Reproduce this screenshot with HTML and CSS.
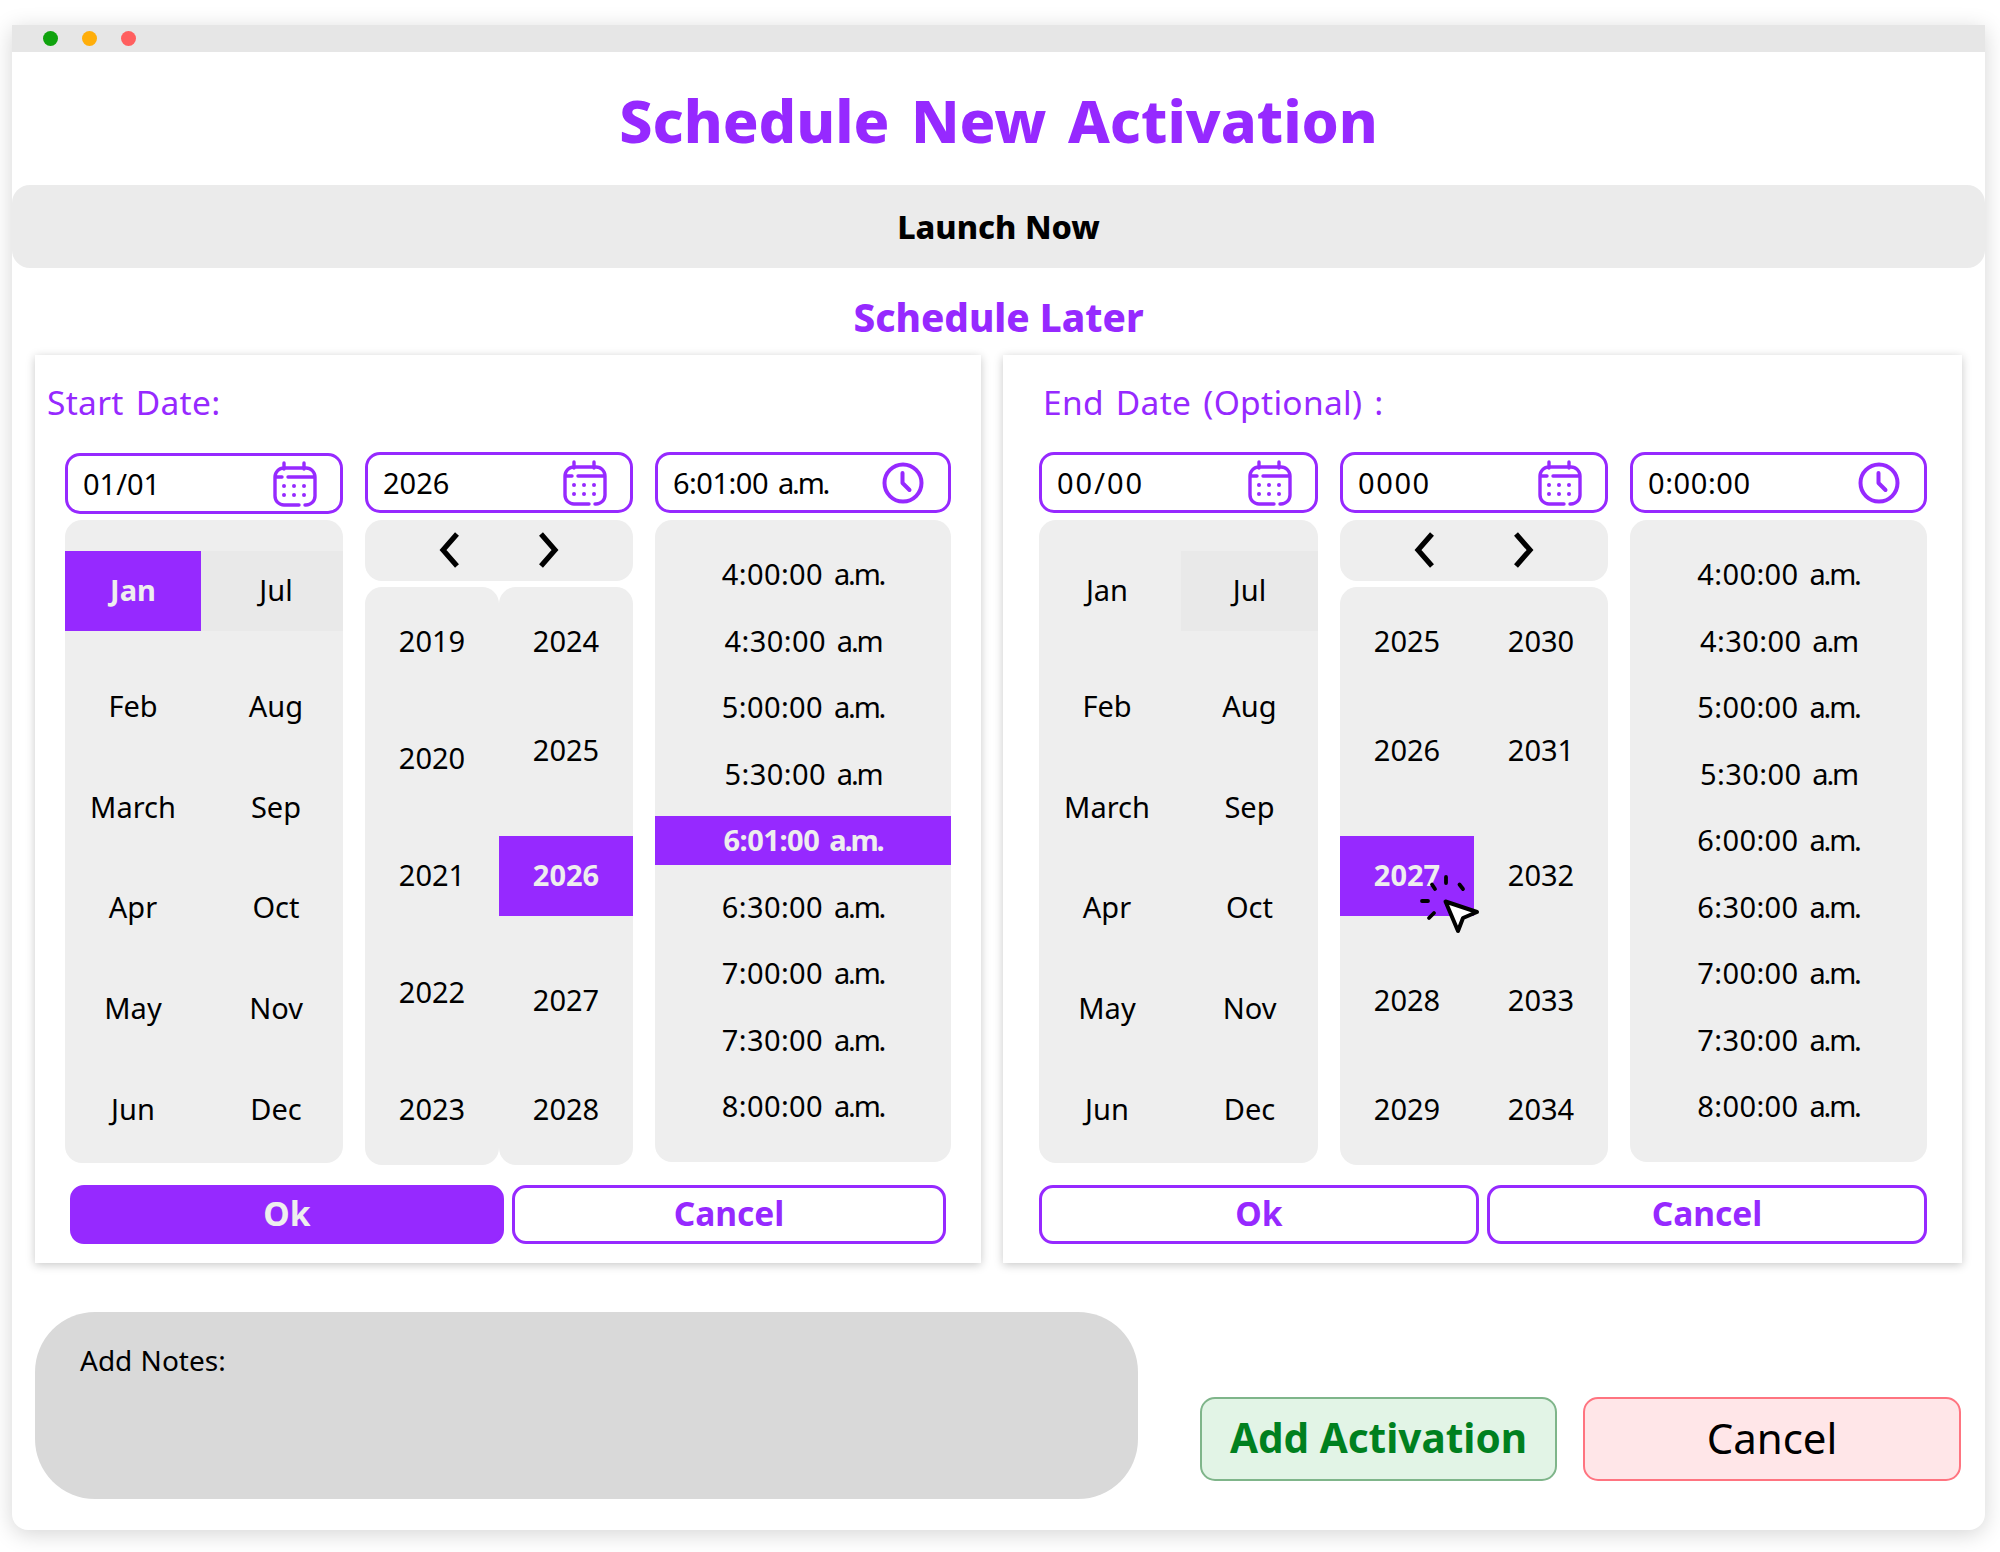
FILE: index.html
```html
<!DOCTYPE html>
<html lang="en">
<head>
<meta charset="utf-8">
<title>Schedule New Activation</title>
<link rel="stylesheet" href="styles.css">
</head>
<body>
<svg class="sprite" aria-hidden="true">
  <symbol id="i-cal" viewBox="10 8 50 50">
    <path d="M39 54H24a9 9 0 0 1-9-9V26a9 9 0 0 1 9-9H46a9 9 0 0 1 9 9V45a9 9 0 0 1-9 9H45M15 26H22M28 26H55M24 12V18M44 12V18" fill="none" stroke="currentColor" stroke-width="3.4" stroke-linecap="round"/>
    <g fill="currentColor"><circle cx="24" cy="35" r="2"/><circle cx="34" cy="35" r="2"/><circle cx="44" cy="35" r="2"/><circle cx="24" cy="44" r="2"/><circle cx="34" cy="44" r="2"/><circle cx="44" cy="44" r="2"/></g>
  </symbol>
  <symbol id="i-clock" viewBox="7.5 8 50 50">
    <circle cx="32.5" cy="33" r="18.5" fill="none" stroke="currentColor" stroke-width="4"/>
    <path d="M32 23V33L39 40" fill="none" stroke="currentColor" stroke-width="4" stroke-linecap="round" stroke-linejoin="round"/>
  </symbol>
  <symbol id="i-prev" viewBox="0 0 24 38">
    <path d="M19 3L5 19L19 35" fill="none" stroke="currentColor" stroke-width="5.2"/>
  </symbol>
  <symbol id="i-next" viewBox="0 0 24 38">
    <path d="M5 3L19 19L5 35" fill="none" stroke="currentColor" stroke-width="5.2"/>
  </symbol>
</svg>

<main class="window">
  <div class="titlebar">
    <span class="dot dot-green"></span>
    <span class="dot dot-orange"></span>
    <span class="dot dot-red"></span>
  </div>

  <h1 class="title">Schedule New Activation</h1>
  <div class="launch">Launch Now</div>
  <h2 class="later">Schedule Later</h2>

  <div class="cards">
    <section class="card card-start">
      <div class="card-label">Start Date:</div>
      <div class="pickers">
        <div class="col">
          <div class="field field-low"><span>01/01</span><svg class="ico"><use href="#i-cal"/></svg></div>
          <div class="months">
            <div class="m m-sel">Jan</div><div class="m m-hover">Jul</div>
            <div class="m">Feb</div><div class="m">Aug</div>
            <div class="m">March</div><div class="m">Sep</div>
            <div class="m">Apr</div><div class="m">Oct</div>
            <div class="m">May</div><div class="m">Nov</div>
            <div class="m">Jun</div><div class="m">Dec</div>
          </div>
        </div>
        <div class="col">
          <div class="field"><span>2026</span><svg class="ico"><use href="#i-cal"/></svg></div>
          <div class="year-nav"><svg class="chev"><use href="#i-prev"/></svg><svg class="chev"><use href="#i-next"/></svg></div>
          <div class="years">
            <div class="y-col y-col-even">
              <div class="y">2019</div><div class="y">2020</div><div class="y">2021</div><div class="y">2022</div><div class="y">2023</div>
            </div>
            <div class="y-col">
              <div class="y">2024</div><div class="y">2025</div><div class="y y-sel">2026</div><div class="y">2027</div><div class="y">2028</div>
            </div>
          </div>
        </div>
        <div class="col">
          <div class="field field-tight"><span>6:01:00 <span class="ap">a.m.</span></span><svg class="ico"><use href="#i-clock"/></svg></div>
          <div class="times">
            <div class="t">4:00:00 <span class="ap">a.m.</span></div><div class="t">4:30:00 <span class="ap">a.m</span></div><div class="t">5:00:00 <span class="ap">a.m.</span></div><div class="t">5:30:00 <span class="ap">a.m</span></div>
            <div class="t t-sel">6:01:00 <span class="ap">a.m.</span></div>
            <div class="t">6:30:00 <span class="ap">a.m.</span></div><div class="t">7:00:00 <span class="ap">a.m.</span></div><div class="t">7:30:00 <span class="ap">a.m.</span></div><div class="t">8:00:00 <span class="ap">a.m.</span></div>
          </div>
        </div>
      </div>
      <div class="actions">
        <button class="btn btn-solid">Ok</button>
        <button class="btn">Cancel</button>
      </div>
    </section>

    <section class="card card-end">
      <div class="card-label">End Date (Optional) :</div>
      <div class="pickers">
        <div class="col">
          <div class="field field-blank-date"><span>00/00</span><svg class="ico"><use href="#i-cal"/></svg></div>
          <div class="months">
            <div class="m">Jan</div><div class="m m-hover">Jul</div>
            <div class="m">Feb</div><div class="m">Aug</div>
            <div class="m">March</div><div class="m">Sep</div>
            <div class="m">Apr</div><div class="m">Oct</div>
            <div class="m">May</div><div class="m">Nov</div>
            <div class="m">Jun</div><div class="m">Dec</div>
          </div>
        </div>
        <div class="col">
          <div class="field field-blank-year"><span>0000</span><svg class="ico"><use href="#i-cal"/></svg></div>
          <div class="year-nav"><svg class="chev"><use href="#i-prev"/></svg><svg class="chev"><use href="#i-next"/></svg></div>
          <div class="years years-joined">
            <div class="y-col">
              <div class="y">2025</div><div class="y">2026</div>
              <div class="y y-sel">2027
                <svg class="cursor" viewBox="0 0 100 100" aria-hidden="true">
                  <path d="M45.5 42.5L77 53L63 59L58 72Z" fill="#fff" stroke="#000" stroke-width="4" stroke-linejoin="round"/>
                  <path d="M46 18V24M59.5 25.500L63 30M32 25.500L35 30M22 42H28M29 59L34 54" fill="none" stroke="#000" stroke-width="3.800" stroke-linecap="round"/>
                </svg>
              </div>
              <div class="y">2028</div><div class="y">2029</div>
            </div>
            <div class="y-col">
              <div class="y">2030</div><div class="y">2031</div><div class="y y-tall">2032</div><div class="y">2033</div><div class="y">2034</div>
            </div>
          </div>
        </div>
        <div class="col">
          <div class="field field-blank-time"><span>0:00:00</span><svg class="ico"><use href="#i-clock"/></svg></div>
          <div class="times">
            <div class="t">4:00:00 <span class="ap">a.m.</span></div><div class="t">4:30:00 <span class="ap">a.m</span></div><div class="t">5:00:00 <span class="ap">a.m.</span></div><div class="t">5:30:00 <span class="ap">a.m</span></div>
            <div class="t">6:00:00 <span class="ap">a.m.</span></div>
            <div class="t">6:30:00 <span class="ap">a.m.</span></div><div class="t">7:00:00 <span class="ap">a.m.</span></div><div class="t">7:30:00 <span class="ap">a.m.</span></div><div class="t">8:00:00 <span class="ap">a.m.</span></div>
          </div>
        </div>
      </div>
      <div class="actions">
        <button class="btn">Ok</button>
        <button class="btn">Cancel</button>
      </div>
    </section>
  </div>

  <div class="bottom">
    <div class="notes">Add Notes:</div>
    <button class="cta cta-add">Add Activation</button>
    <button class="cta cta-cancel">Cancel</button>
  </div>
</main>
</body>
</html>
```
FILE: styles.css
```css
* { box-sizing: border-box; }
html, body { margin: 0; padding: 0; background: #fff; }
body {
  width: 2000px;
  height: 1552px;
  overflow: hidden;
  padding: 25px 15px 22px 12px;
  font-family: "Noto Sans", "Open Sans", sans-serif;
  font-size: 29px;
  color: #000;
}
.sprite { position: absolute; width: 0; height: 0; }

.window {
  width: 1973px;
  height: 1505px;
  background: #fff;
  border-radius: 0 0 16px 16px;
  box-shadow: 0 4px 22px rgba(0, 0, 0, 0.17);
}
.titlebar {
  height: 27px;
  background: #e6e6e6;
  display: flex;
  align-items: center;
  gap: 24px;
  padding-left: 31px;
}
.dot { width: 15px; height: 15px; border-radius: 50%; }
.dot-green { background: #10a30e; }
.dot-orange { background: #ffae0a; }
.dot-red { background: #ff5f5f; }

.title {
  height: 133px;
  margin: 0;
  padding-top: 3px;
  display: flex;
  align-items: center;
  justify-content: center;
  font-size: 59.200px;
  font-weight: 800;
  color: #9629ff;
  word-spacing: 6px;
}
.launch {
  height: 83px;
  padding-bottom: 2px;
  background: #ebebeb;
  border-radius: 18px;
  display: flex;
  align-items: center;
  justify-content: center;
  font-size: 32.400px;
  font-weight: 800;
}
.later {
  height: 87px;
  margin: 0;
  padding-top: 10px;
  display: flex;
  align-items: center;
  justify-content: center;
  font-size: 38.600px;
  font-weight: 800;
  color: #9629ff;
}

.cards { display: flex; gap: 22px; padding-left: 23px; }
.card {
  height: 908px;
  padding-top: 28px;
  background: #fff;
  box-shadow: 0 2px 9px rgba(0, 0, 0, 0.22);
}
.card-start { width: 946px; padding-left: 30px; }
.card-end { width: 959px; padding-left: 36px; }
.card-label {
  height: 40px;
  font-size: 33.500px;
  line-height: 38px;
  letter-spacing: 0.3px;
  word-spacing: 3px;
  color: #9629ff;
}
.card-start .card-label { margin-left: -18px; }
.card-end .card-label { margin-left: 4px; }

.pickers {
  display: grid;
  gap: 22px;
  margin-top: 29px;
}
.card-start .pickers { grid-template-columns: 278px 268px 296px; }
.card-end .pickers { grid-template-columns: 279px 268px 297px; }
.col { display: flex; flex-direction: column; height: 713px; }

.field {
  height: 61px;
  flex: none;
  border: 3px solid #9629ff;
  border-radius: 15px;
  padding: 0 20px 0 15px;
  display: flex;
  align-items: center;
  justify-content: space-between;
  background: #fff;
  font-size: 29px;
  word-spacing: 3px;
}
.field-low { transform: translateY(1px); }
.field-tight { letter-spacing: -0.500px; }
.field-blank-date { letter-spacing: 2px; }
.field-blank-year { letter-spacing: 1.600px; }
.field-blank-time { letter-spacing: 0.600px; }
.ico { width: 50px; height: 50px; color: #9629ff; flex: none; letter-spacing: 0; }
.ap { letter-spacing: -2.200px; }

.months {
  margin-top: 7px;
  height: 643px;
  background: #eee;
  border-radius: 17px;
  padding-top: 31px;
  display: grid;
  grid-template-rows: 80px 125.750px repeat(4, 100.750px);
}
.card-start .months { grid-template-columns: 136px 1fr; }
.card-end .months { grid-template-columns: 142px 1fr; }
.m {
  display: flex;
  align-items: center;
  justify-content: center;
  padding-bottom: 2px;
}
.m:nth-child(1), .m:nth-child(2) { padding-bottom: 4px; }
.m:nth-child(3), .m:nth-child(4) { padding-top: 25px; }
.card-start .m:nth-child(even) { padding-left: 8px; }
.card-end .m:nth-child(odd) { padding-right: 6px; }
.m-sel { background: #9629ff; color: #eee; font-weight: 700; }
.m-hover { background: #e9e9e9; }

.year-nav {
  margin-top: 7px;
  height: 61px;
  flex: none;
  padding-bottom: 2px;
  background: #eee;
  border-radius: 17px;
  display: flex;
  align-items: center;
  justify-content: center;
  gap: 74px;
}
.chev { width: 24px; height: 38px; color: #000; }

.years {
  margin-top: 6px;
  height: 578px;
  display: flex;
}
.y-col {
  flex: 1 1 50%;
  background: #eee;
  border-radius: 17px;
  padding-top: 31px;
  display: flex;
  flex-direction: column;
  gap: 61px;
}
.y-col-even { gap: 69px; }
.years-joined { background: #eee; border-radius: 17px; }
.years-joined .y-col { background: none; border-radius: 0; }
.y {
  position: relative;
  height: 48px;
  flex: none;
  padding-bottom: 3px;
  display: flex;
  align-items: center;
  justify-content: center;
}
.y-sel, .y-tall { height: 80px; }
.y-sel { background: #9629ff; color: #eee; font-weight: 700; }
.cursor {
  position: absolute;
  left: 60px;
  top: 23px;
  width: 100px;
  height: 100px;
  overflow: visible;
}

.times {
  margin-top: 7px;
  height: 642px;
  background: #eee;
  border-radius: 17px;
  padding-top: 30px;
  display: flex;
  flex-direction: column;
  gap: 17.500px;
}
.t {
  height: 49px;
  flex: none;
  padding-bottom: 2px;
  display: flex;
  align-items: center;
  justify-content: center;
  white-space: pre;
  letter-spacing: 0.400px;
  word-spacing: 3px;
}
.t-sel { background: #9629ff; color: #eee; font-weight: 700; letter-spacing: -0.500px; }

.actions { display: flex; gap: 8px; margin-top: 20px; }
.card-start .actions { padding-left: 5px; }
.btn {
  height: 59px;
  width: 434px;
  border: 3px solid #9629ff;
  border-radius: 14px;
  background: #fff;
  color: #9629ff;
  font-family: inherit;
  font-size: 33.500px;
  font-weight: 700;
  padding: 0 0 3px;
}
.card-end .btn { width: 440px; }
.btn-solid { background: #9629ff; color: #eee; }

.bottom { display: flex; align-items: flex-start; padding: 49px 0 0 23px; }
.notes {
  width: 1103px;
  height: 187px;
  background: #d9d9d9;
  border-radius: 60px;
  padding: 29px 0 0 45px;
  font-size: 28px;
  word-spacing: 1px;
  line-height: 38px;
}
.cta {
  height: 84px;
  margin-top: 85px;
  border-radius: 15px;
  font-family: inherit;
  font-size: 40.500px;
  padding: 0 0 3px;
}
.cta-add {
  width: 357px;
  margin-left: 62px;
  background: #e2f4e6;
  border: 2px solid #7fb58a;
  color: #00801f;
  font-weight: 700;
}
.cta-cancel {
  width: 378px;
  margin-left: 26px;
  background: #ffe6e8;
  border: 2px solid #ff7480;
  color: #000;
  font-size: 42px;
}
```
